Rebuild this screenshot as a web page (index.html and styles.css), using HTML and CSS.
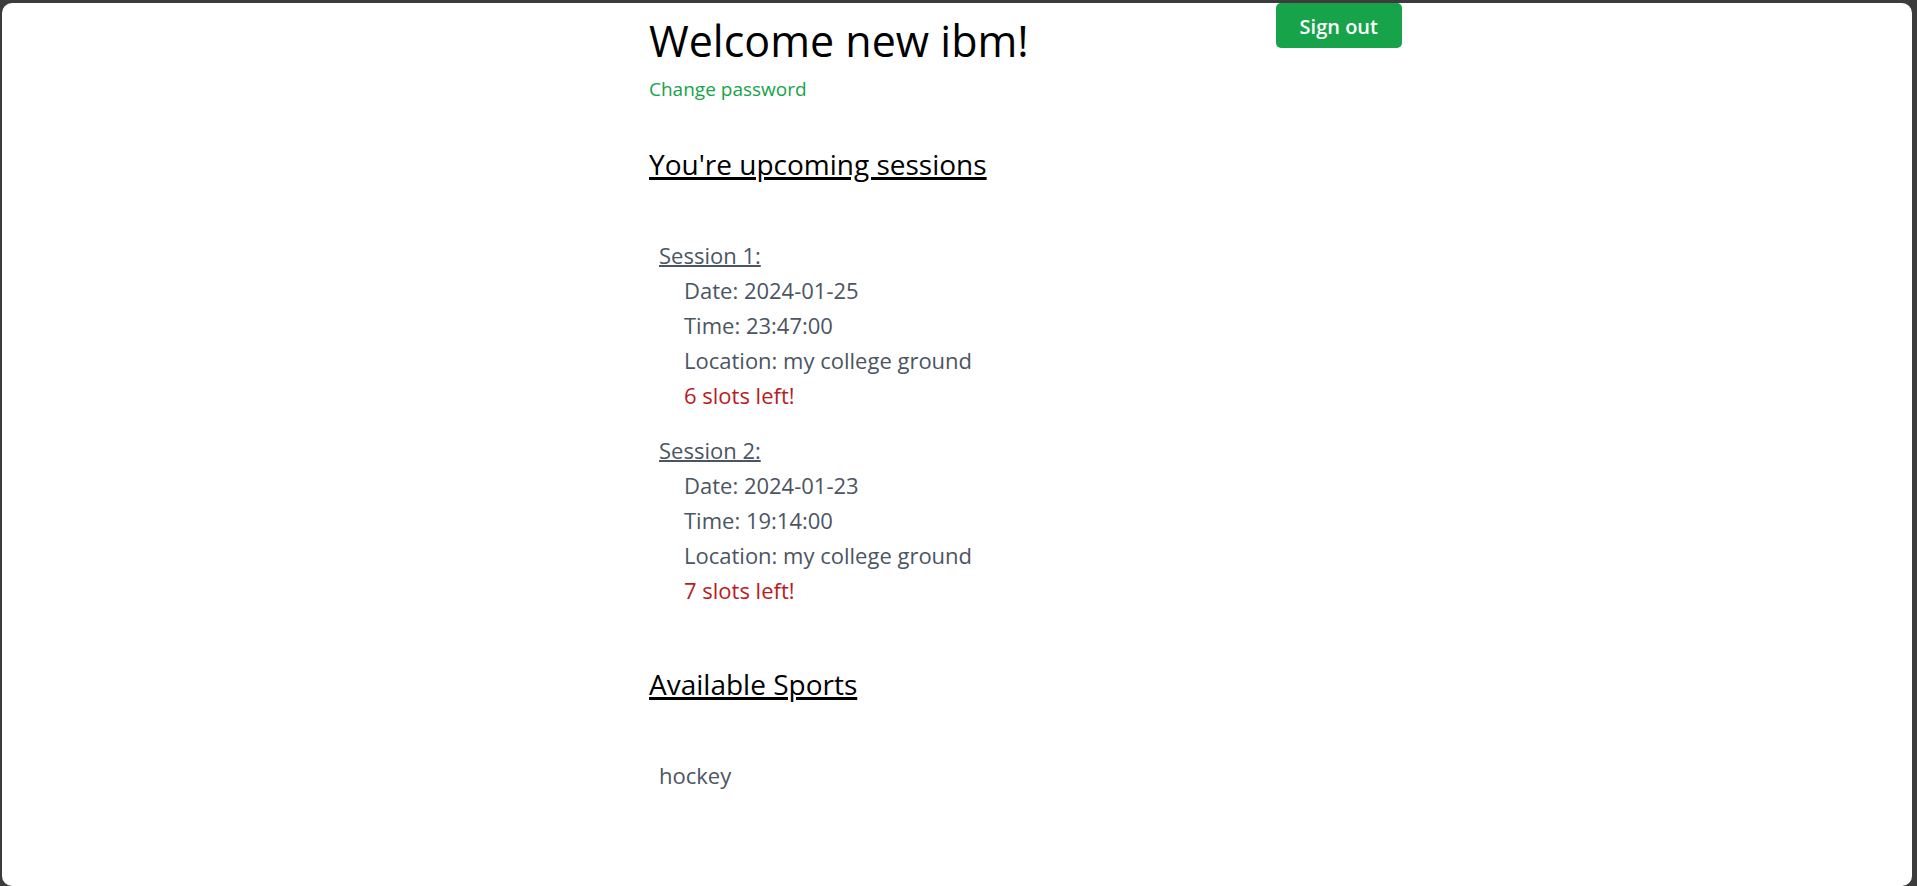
FILE: index.html
```
<!DOCTYPE html>
<html lang="en">
<head>
<meta charset="utf-8">
<meta name="viewport" content="width=device-width, initial-scale=1">
<title>Sports Scheduler</title>
<link rel="stylesheet" href="styles.css">
</head>
<body>
<div class="page">
  <main class="content">
    <header class="header">
      <div class="welcome">
        <h1 class="title">Welcome new ibm!</h1>
        <a class="change-password" href="#">Change password</a>
      </div>
      <button class="sign-out" type="button">Sign out</button>
    </header>
    <section class="section">
      <h2 class="section-title">You're upcoming sessions</h2>
      <div class="list">
        <article class="session">
          <h3 class="session-name">Session 1:</h3>
          <div class="session-details">
            <p>Date: 2024-01-25</p>
            <p>Time: 23:47:00</p>
            <p>Location: my college ground</p>
            <p class="slots">6 slots left!</p>
          </div>
        </article>
        <article class="session">
          <h3 class="session-name">Session 2:</h3>
          <div class="session-details">
            <p>Date: 2024-01-23</p>
            <p>Time: 19:14:00</p>
            <p>Location: my college ground</p>
            <p class="slots">7 slots left!</p>
          </div>
        </article>
      </div>
    </section>
    <section class="section">
      <h2 class="section-title">Available Sports</h2>
      <div class="list">
        <a class="sport" href="#">hockey</a>
      </div>
    </section>
  </main>
</div>
</body>
</html>
```
FILE: styles.css
```
* {
  box-sizing: border-box;
  margin: 0;
}

body {
  display: flex;
  min-height: 100vh;
  padding: 3px 5px 0 2px;
  background: #3c3c3c;
  color: #000;
  font-family: "Segoe UI", "Open Sans", "Noto Sans", sans-serif;
}

.page {
  display: grid;
  grid-template-columns: 647fr 753fr 510fr;
  flex: 1;
  border-radius: 10px;
  background: #fff;
}

.content {
  grid-column: 2;
}

.header {
  display: flex;
  align-items: flex-start;
  justify-content: space-between;
}

.welcome {
  padding-top: 13px;
}

.title {
  font-size: 43px;
  font-weight: 400;
  line-height: 50px;
}

.change-password {
  display: block;
  margin-top: 8px;
  color: #16a34a;
  font-size: 19px;
  line-height: 30px;
  text-decoration: none;
}

.sign-out {
  padding: 9px 24px 6px;
  border: 0;
  border-radius: 5px;
  background: #16a34a;
  color: #fff;
  font-family: inherit;
  font-size: 20px;
  font-weight: 600;
  line-height: 30px;
}

.section {
  padding-top: 40px;
}

.section-title {
  font-size: 28px;
  font-weight: 400;
  line-height: 40px;
  text-decoration: underline;
  text-decoration-thickness: 3px;
}

.list {
  display: flex;
  flex-direction: column;
  gap: 20px;
  padding: 54px 10px 16px;
  color: #4b5563;
  font-size: 22px;
  line-height: 35px;
}

.session-name {
  font-size: 22px;
  font-weight: 400;
  text-decoration: underline;
  text-decoration-thickness: 2px;
}

.session-details {
  padding-left: 25px;
}

.slots {
  color: #b91c1c;
}

.sport {
  color: inherit;
  text-decoration: none;
}
```
